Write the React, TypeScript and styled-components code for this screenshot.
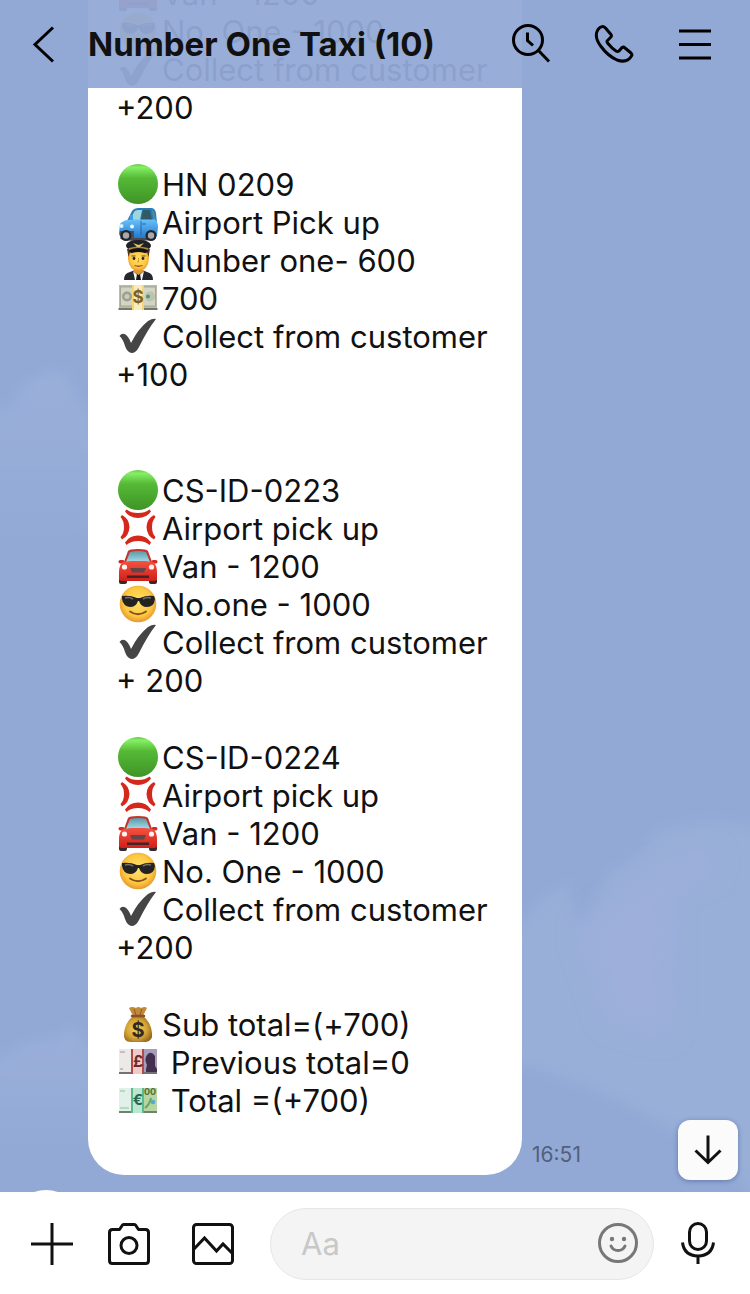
import React from "react";
import styled, { createGlobalStyle } from "styled-components";

const GlobalStyle = createGlobalStyle`
  *, *::before, *::after { box-sizing: border-box; }
  body { margin: 0; }
  button { margin: 0; padding: 0; border: 0; background: none; color: inherit; font: inherit; cursor: pointer; }
`;

const Screen = styled.div`
  display: flex;
  flex-direction: column;
  height: 100vh;
  background: #fff;
  color: #111;
  font-family: Inter, "Liberation Sans", sans-serif;
`;

const Conversation = styled.main`
  position: relative;
  flex: 1;
  min-height: 0;
  overflow: hidden;
  display: flex;
  flex-direction: column;
  justify-content: flex-end;
  background: #92a9d6;
`;

const Sky = styled.svg`
  position: absolute;
  inset: 0;
  width: 100%;
  height: 100%;
`;

const Header = styled.header`
  position: absolute;
  top: 0;
  left: 0;
  right: 0;
  z-index: 2;
  display: flex;
  align-items: center;
  height: 88px;
  padding: 0 14px 0 0;
  background: rgba(146, 169, 214, 0.95);
`;

const HeaderButton = styled.button<{ $width: number }>`
  display: flex;
  align-items: center;
  justify-content: center;
  flex: none;
  width: ${(p) => p.$width}px;
  height: 88px;
  color: #000;
`;

const Title = styled.h1`
  flex: 1;
  min-width: 0;
  margin: 0;
  font-size: 33px;
  line-height: 40px;
  font-weight: 700;
  white-space: nowrap;
`;

const MessageRow = styled.div`
  position: relative;
  display: flex;
  flex: none;
  align-items: flex-end;
  gap: 10px;
  padding-left: 88px;
`;

const Bubble = styled.article`
  display: flex;
  flex-direction: column;
  gap: 39px;
  width: 434px;
  padding: 28px 28px 55px;
  border-radius: 36px;
  background: #fff;
`;

const Group = styled.div<{ $spaced?: boolean }>`
  padding-bottom: ${(p) => (p.$spaced ? 39 : 0)}px;
`;

const Line = styled.p`
  display: flex;
  align-items: center;
  height: 38px;
  margin: 0;
  font-size: 31px;
  line-height: 38px;
  white-space: pre;
`;

const Emoji = styled.svg`
  flex: none;
  width: 40px;
  height: 40px;
  margin: 0 4px 2px 2px;
`;

const Time = styled.time`
  padding-bottom: 8px;
  font-size: 21px;
  line-height: 24px;
  color: #53607c;
`;

const NextRow = styled.div`
  position: relative;
  flex: none;
  height: 2px;
  margin-top: 15px;
  padding-left: 10px;
  overflow: hidden;
`;

const Avatar = styled.div`
  width: 72px;
  height: 72px;
  border-radius: 50%;
  background: #fff;
`;

const ScrollButton = styled.button`
  position: absolute;
  right: 12px;
  bottom: 12px;
  display: flex;
  align-items: center;
  justify-content: center;
  width: 60px;
  height: 60px;
  border-radius: 12px;
  background: #fbfbfc;
  box-shadow: 0 1px 5px rgba(40, 60, 110, 0.45);
`;

const Composer = styled.form`
  display: flex;
  align-items: center;
  flex: none;
  padding: 16px 8px 14px 14px;
  background: #fff;
`;

const ToolButton = styled.button<{ $width: number }>`
  display: flex;
  align-items: center;
  justify-content: center;
  flex: none;
  width: ${(p) => p.$width}px;
  height: 72px;
`;

const Field = styled.div`
  display: flex;
  align-items: center;
  flex: 1;
  min-width: 0;
  height: 72px;
  margin-left: 12px;
  padding: 0 15px 0 30px;
  border: 1px solid #e6e6e6;
  border-radius: 36px;
  background: #f4f4f4;
`;

const TextInput = styled.input`
  flex: 1;
  min-width: 0;
  padding: 0;
  border: 0;
  outline: 0;
  background: transparent;
  font: 400 31px/40px Inter, "Liberation Sans", sans-serif;
  color: #111;
  &::placeholder { color: #c8c8c8; opacity: 1; }
`;

const StickerButton = styled.button`
  display: flex;
  flex: none;
  margin-bottom: 2px;
`;

type EmojiName =
  | "green" | "blueCar" | "pilot" | "dollar" | "check" | "anger"
  | "redCar" | "cool" | "bag" | "pound" | "euro";

const DefsSvg = styled.svg`
  position: absolute;
  width: 0;
  height: 0;
`;

const Defs = () => (
  <DefsSvg aria-hidden="true">
    <defs>
      <linearGradient id="green" x1="0" y1="0" x2="0" y2="1">
        <stop offset="0" stopColor="#63c944" />
        <stop offset="0.08" stopColor="#86f066" />
        <stop offset="0.35" stopColor="#55b936" />
        <stop offset="1" stopColor="#3f9426" />
      </linearGradient>
      <linearGradient id="blue" x1="0" y1="0" x2="0" y2="1">
        <stop offset="0" stopColor="#69c0fa" />
        <stop offset="1" stopColor="#2377cc" />
      </linearGradient>
      <linearGradient id="red" x1="0" y1="0" x2="0" y2="1">
        <stop offset="0" stopColor="#f5523f" />
        <stop offset="1" stopColor="#cf1f1a" />
      </linearGradient>
      <linearGradient id="glass" x1="0" y1="0" x2="0" y2="1">
        <stop offset="0" stopColor="#5d97a4" />
        <stop offset="1" stopColor="#a3dcea" />
      </linearGradient>
      <radialGradient id="face" cx="0.5" cy="0.45" r="0.55">
        <stop offset="0" stopColor="#ffe26a" />
        <stop offset="0.7" stopColor="#fcc842" />
        <stop offset="1" stopColor="#e8972c" />
      </radialGradient>
      <radialGradient id="gold" cx="0.45" cy="0.5" r="0.6">
        <stop offset="0" stopColor="#f6d567" />
        <stop offset="0.6" stopColor="#d5a435" />
        <stop offset="1" stopColor="#93671b" />
      </radialGradient>
    </defs>
  </DefsSvg>
);

const Sign = ({ x, y, size, fill, children }: { x: number; y: number; size: number; fill: string; children: string }) => (
  <text x={x} y={y} fontSize={size} fontWeight="700" textAnchor="middle" fill={fill} fontFamily="Inter, sans-serif">
    {children}
  </text>
);

const art: Record<EmojiName, React.ReactNode> = {
  green: <circle cx="20" cy="20" r="20" fill="url(#green)" />,
  blueCar: (
    <>
      <ellipse cx="20" cy="36" rx="18" ry="3" fill="#484a50" />
      <path d="M9 19 L14 9 Q16 6 21 6 L33 6 Q37 6 38 11 L39 21 Z" fill="#287cba" />
      <path d="M12 18 L16 10 Q17 8 20 8 L24 8 L22 18 Z" fill="#9fd6dd" />
      <path d="M25 8 L32 8 L34 18 L23 18 Z" fill="#315a67" />
      <path d="M34 8 Q36 8 36.500 11 L38 18 L35.500 18 Z" fill="#4b8ba2" />
      <path d="M2 22 Q5 18 12 17.500 L37 17.500 Q40 20 40 25 L39 34 Q37 37 31 36 L8 36 Q1 36 1 31 Z" fill="url(#blue)" />
      <path d="M2 29 H16 V36 H4 Q1 35 2 29Z" fill="#45505b" />
      <circle cx="3.500" cy="24" r="2" fill="#d9f4ff" /><circle cx="14" cy="24.500" r="2" fill="#e8f8ff" />
      <path d="M23 19 V33 M24 22 H28" stroke="#175897" strokeWidth="0.8" />
      <path d="M12 13 h3 v5 h-3z" fill="#3e9fe7" />
      <circle cx="8" cy="33.500" r="5.500" fill="#252529" /><circle cx="8" cy="33.500" r="3.200" fill="#a6aab0" />
      <circle cx="33" cy="33.500" r="5.500" fill="#252529" /><circle cx="33" cy="33.500" r="3.200" fill="#a6aab0" />
    </>
  ),
  pilot: (
    <>
      <path d="M6 40 Q6 33 12 32 L17 30 H24 L29 32 Q35 33 35 40 Z" fill="#24272e" />
      <path d="M15 31 L20.500 36 L26 31 L24 40 H17 Z" fill="#f5f6f8" />
      <path d="M19 34 h3 l1 6 h-5z" fill="#15171c" />
      <path d="M16 26 H25 V32 L20.500 35 L16 32 Z" fill="#d99b2d" />
      <path d="M10 9 H31 V19 Q30 30 20.500 31 Q11 30 10 19 Z" fill="url(#face)" />
      <path d="M9 9 H32 L30.500 17 L29 12 H12 L10.500 17 Z" fill="#50351e" />
      <path d="M8 5 Q10 0 20.500 0 Q31 0 33 5 Q33 8 30 9 Q20 6 11 9 Q8 8 8 5 Z" fill="#202126" />
      <path d="M11 8 Q20.500 5 30 8 V11 Q20 8 11 11 Z" fill="#b08a34" />
      <path d="M11 10 Q20.500 6 30 10 Q30 13 27 13 Q20 11 14 13 Q11 13 11 10Z" fill="#111217" />
      <path d="M15 3 L20.500 5 L26 3 L22 7 H19Z" fill="#e8c85c" />
      <path d="M13.500 16 h4 M23.500 16 h4" stroke="#6d481e" strokeWidth="1.200" />
      <circle cx="16" cy="18.500" r="1.400" fill="#342113" /><circle cx="25" cy="18.500" r="1.400" fill="#342113" />
      <path d="M20.500 18 V22 H19" stroke="#d9912c" fill="none" />
      <path d="M16.500 25.500 Q20.500 27 24.500 25.500" stroke="#a44b2d" strokeWidth="1.300" fill="none" />
    </>
  ),
  dollar: (
    <>
      <path d="M0.500 30 H39.500 V32 H0.500Z" fill="#777867" />
      <rect x="1" y="7" width="38" height="23" fill="#b9bda5" />
      <rect x="2.500" y="9" width="35" height="19" fill="#d3d4c4" stroke="#9ba290" strokeWidth="0.800" />
      <circle cx="9" cy="18.500" r="5" fill="#9aa18f" /><circle cx="9" cy="18.500" r="2.500" fill="#c9ccba" />
      <circle cx="32" cy="18.500" r="5" fill="#bac4af" /><circle cx="30" cy="18.500" r="2" fill="#4d9a6a" />
      <rect x="14" y="7" width="12" height="25" fill="#faecba" /><path d="M15 7V32M25 7V32" stroke="#f3cd62" strokeWidth="1.500" />
      <Sign x={20} y={25} size={17} fill="#80601a">$</Sign>
    </>
  ),
  check: (
    <path d="M1.500 20 Q4 16.500 7.500 18.500 Q11 21 13 27 Q20 13 30 5 Q35 2 38 3 Q30 13 21 31 Q18 37 13.500 37 Q9 36 7 30 Q5 23 1.500 20Z" fill="#454545" />
  ),
  anger: (
    <g fill="#d5281d">
      <path d="M8.500 1.500 Q13 5 20 5 Q27 5 31.500 1.500 L33 3.500 Q28.500 10 20 10 Q11.500 10 7 3.500Z" />
      <path d="M8.500 37 Q13 33 20 33 Q27 33 31.500 37 L33 34.500 Q28.500 27.500 20 27.500 Q11.500 27.500 7 34.500Z" />
      <path d="M4 7 Q11 10.500 11.500 19 Q11 28 4 31.500 L2.500 29 Q6 25.500 6 19 Q6 13 2.500 9Z" />
      <path d="M36 7 Q29 10.500 28.500 19 Q29 28 36 31.500 L37.500 29 Q34 25.500 34 19 Q34 13 37.500 9Z" />
    </g>
  ),
  redCar: (
    <>
      <rect x="1" y="31" width="8" height="7" rx="2" fill="#35282a" /><rect x="31" y="31" width="8" height="7" rx="2" fill="#35282a" />
      <path d="M6 16 L10 5 Q11 3 20 3 Q29 3 30 5 L34 16Z" fill="#c4342d" />
      <path d="M8 16 L12 6 Q20 4 28 6 L32 16 Q20 14 8 16Z" fill="url(#glass)" />
      <rect x="0.500" y="14" width="6" height="3.500" rx="1.700" fill="#d42a24" /><rect x="33.500" y="14" width="6" height="3.500" rx="1.700" fill="#d42a24" />
      <path d="M5 16 Q20 14 35 16 Q39 19 39 26 V33 Q39 35 35 35 H5 Q1 35 1 33 V26 Q1 19 5 16Z" fill="url(#red)" />
      <circle cx="6.500" cy="21" r="2.600" fill="#fff2ef" /><circle cx="33.500" cy="21" r="2.600" fill="#fff2ef" />
      <path d="M12 22 H28 L26 26.500 H14Z" fill="#62464b" />
      <path d="M9 29.500 H31 V32 H9Z" fill="#442328" />
    </>
  ),
  cool: (
    <>
      <circle cx="20" cy="20" r="18.300" fill="url(#face)" />
      <path d="M4 12 Q12 11 19 14 H22 Q29 11 36 12 L37 15 Q36 23 29 23 Q23 23 21 17 H20 Q18 23 12 23 Q5 22 4 15Z" fill="#242322" />
      <path d="M7 14 Q11 12.500 15 15" stroke="#77736d" strokeWidth="1.500" fill="none" /><path d="M25 15 Q29 12.500 33 14" stroke="#77736d" strokeWidth="1.500" fill="none" />
      <path d="M12 27.500 Q20 33 28 27.500" stroke="#85501b" strokeWidth="1.800" fill="none" strokeLinecap="round" />
    </>
  ),
  bag: (
    <>
      <path d="M15 12 Q7 19 6 29 Q5 38 13 38 H28 Q35 37 34 29 Q33 18 25 12Z" fill="url(#gold)" />
      <path d="M15 12 L11 4 Q14 2 18 4 Q20 2 23 4 Q27 2 29 4 L25 12Z" fill="#c28b3c" />
      <path d="M16 5 L18 11 M24 5 L22 11" stroke="#895c22" />
      <path d="M14 12 H26" stroke="#8a5126" strokeWidth="2.500" strokeLinecap="round" />
      <Sign x={20} y={33} size={20} fill="#34291a">$</Sign>
    </>
  ),
  pound: (
    <>
      <rect x="1" y="29" width="38" height="3" fill="#777078" />
      <rect x="1" y="7" width="38" height="23" fill="#eceae6" /><path d="M26 7H39V30H26Z" fill="#a79dbb" />
      <path d="M28 30 V27 L29 23 Q26 17 29 13 Q33 8 37 14 L37 24 L39 27 V30Z" fill="#43304f" />
      <rect x="13" y="7" width="13" height="25" fill="#ecccc8" /><path d="M14 7V32M25 7V32" stroke="#b54849" strokeWidth="2" />
      <Sign x={20} y={25} size={16} fill="#74282c">£</Sign>
      <path d="M2 10h5M2 27h3" stroke="#99919e" />
    </>
  ),
  euro: (
    <>
      <rect x="1" y="30" width="38" height="3" fill="#718171" />
      <rect x="1" y="8" width="38" height="23" fill="#e2f0ea" /><path d="M26 8H39V31H26Z" fill="#b5d69f" />
      <path d="M27 28 Q32 24 33 18" stroke="#6ba565" strokeWidth="2" fill="none" />
      <circle cx="35" cy="22" r="2.300" fill="#55a9d3" />
      <rect x="13" y="8" width="13" height="25" fill="#bde5d2" /><path d="M14 8V33M25 8V33" stroke="#58ba8d" strokeWidth="2" />
      <Sign x={20} y={25} size={15} fill="#286652">€</Sign>
      <Sign x={32} y={15} size={9} fill="#546f37">00</Sign>
      <path d="M2 11h5M2 28h9" stroke="#86c493" />
    </>
  ),
};

type Entry = { icon?: EmojiName; text: string };
type Section = { spaced?: boolean; lines: Entry[] };

const sections: Section[] = [
  {
    lines: [
      { icon: "redCar", text: "Van - 1200" },
      { icon: "cool", text: "No. One - 1000" },
      { icon: "check", text: "Collect from customer" },
      { text: "+200" },
    ],
  },
  {
    spaced: true,
    lines: [
      { icon: "green", text: "HN 0209" },
      { icon: "blueCar", text: "Airport Pick up" },
      { icon: "pilot", text: "Nunber one- 600" },
      { icon: "dollar", text: "700" },
      { icon: "check", text: "Collect from customer" },
      { text: "+100" },
    ],
  },
  {
    lines: [
      { icon: "green", text: "CS-ID-0223" },
      { icon: "anger", text: "Airport pick up" },
      { icon: "redCar", text: "Van - 1200" },
      { icon: "cool", text: "No.one - 1000" },
      { icon: "check", text: "Collect from customer" },
      { text: "+ 200" },
    ],
  },
  {
    lines: [
      { icon: "green", text: "CS-ID-0224" },
      { icon: "anger", text: "Airport pick up" },
      { icon: "redCar", text: "Van - 1200" },
      { icon: "cool", text: "No. One - 1000" },
      { icon: "check", text: "Collect from customer" },
      { text: "+200" },
    ],
  },
  {
    lines: [
      { icon: "bag", text: "Sub total=(+700)" },
      { icon: "pound", text: " Previous total=0" },
      { icon: "euro", text: " Total =(+700)" },
    ],
  },
];

const Clouds = () => (
  <Sky viewBox="0 0 750 1192" preserveAspectRatio="xMidYMax slice" aria-hidden="true">
    <defs>
      <filter id="soft" x="-20%" y="-20%" width="140%" height="140%"><feGaussianBlur stdDeviation="6" /></filter>
      <filter id="softer" x="-30%" y="-30%" width="160%" height="160%"><feGaussianBlur stdDeviation="12" /></filter>
      <linearGradient id="fade" x1="0" y1="0" x2="0" y2="1">
        <stop offset="0" stopColor="#9ab0da" />
        <stop offset="1" stopColor="#92a9d6" />
      </linearGradient>
    </defs>
    <g fill="url(#fade)">
      <path filter="url(#soft)" d="M-20 412 L14 406 L20 388 Q38 378 50 373 Q66 370 70 385 L94 425 V545 H-20Z" />
      <path filter="url(#soft)" d="M-20 1066 L10 1054 L28 1042 L58 1040 Q66 1024 78 1034 L94 1062 V1150 H-20Z" />
    </g>
    <path filter="url(#soft)" fill="#98afd8" d="M515 932 L540 900 L568 884 L576 922 L588 916 L608 874 L640 854 L656 832 L710 820 L770 828 V1210 Q680 1110 515 1062Z" />
    <path filter="url(#softer)" fill="#9dafda" d="M580 930 L620 900 L660 868 L712 850 L712 872 L670 890 L668 1035 L610 1020Z" />
  </Sky>
);

export default function App() {
  return (
    <Screen>
      <GlobalStyle />
      <Defs />
      <Conversation>
        <Clouds />
        <Header>
          <HeaderButton type="button" aria-label="Back" $width={88}>
            <svg width="40" height="40" viewBox="0 0 40 40" fill="none" stroke="currentColor" strokeWidth="3">
              <path d="M29 3.500 L11 20.500 L29 37.500" />
            </svg>
          </HeaderButton>
          <Title>Number One Taxi (10)</Title>
          <HeaderButton type="button" aria-label="Search" $width={86}>
            <svg width="40" height="40" viewBox="0 0 40 40" fill="none" stroke="currentColor" strokeWidth="3">
              <circle cx="17" cy="16" r="14.500" />
              <path d="M16.500 8.500 V16.500 L22 21.500 M27.500 26.500 L38 37.500" />
            </svg>
          </HeaderButton>
          <HeaderButton type="button" aria-label="Call" $width={80}>
            <svg width="40" height="40" viewBox="0 0 40 40" fill="none" stroke="currentColor" strokeWidth="3" strokeLinejoin="round">
              <path d="M4 5.500 Q8 0.500 11.500 4 L17 10.500 Q18 12 16.500 13.500 L13.500 16.500 Q12.500 17.500 13.500 19 Q18 24.500 22 27 Q23.500 28 25 27 L28 23.500 Q29.500 22.500 31 24 L37 29 Q38.500 30.500 37.500 32 Q33 39.500 23 36 Q14 32 7 22.500 Q-0.500 12.500 4 5.500Z" />
            </svg>
          </HeaderButton>
          <HeaderButton type="button" aria-label="Menu" $width={82}>
            <svg width="40" height="40" viewBox="0 0 40 40" stroke="currentColor" strokeWidth="3">
              <path d="M4 7 H36 M4 20.500 H36 M4 34 H36" />
            </svg>
          </HeaderButton>
        </Header>
        <MessageRow>
          <Bubble>
            {sections.map((section, s) => (
              <Group key={s} $spaced={section.spaced}>
                {section.lines.map((line, i) => (
                  <Line key={i}>
                    {line.icon && <Emoji viewBox="0 0 40 40" aria-hidden="true">{art[line.icon]}</Emoji>}
                    <span>{line.text}</span>
                  </Line>
                ))}
              </Group>
            ))}
          </Bubble>
          <Time>16:51</Time>
        </MessageRow>
        <NextRow><Avatar /></NextRow>
        <ScrollButton type="button" aria-label="Scroll to latest">
          <svg width="32" height="32" viewBox="0 0 32 32" fill="none" stroke="#111" strokeWidth="3">
            <path d="M16 1.500 V29 M3.500 16.500 L16 28.500 L28.500 16.500" />
          </svg>
        </ScrollButton>
      </Conversation>
      <Composer>
        <ToolButton type="button" aria-label="More" $width={76}>
          <svg width="42" height="42" viewBox="0 0 42 42" stroke="#111" strokeWidth="3"><path d="M0 21 H42 M21 0 V42" /></svg>
        </ToolButton>
        <ToolButton type="button" aria-label="Camera" $width={78}>
          <svg width="42" height="42" viewBox="0 0 42 42" fill="none" stroke="#111" strokeWidth="3" strokeLinejoin="round">
            <path d="M4.500 6.500 H11.500 L14.500 2 Q15 1.500 16 1.500 H26 Q27 1.500 27.500 2 L30.500 6.500 H37.500 Q40.500 6.500 40.500 9.500 V37.500 Q40.500 40.500 37.500 40.500 H4.500 Q1.500 40.500 1.500 37.500 V9.500 Q1.500 6.500 4.500 6.500Z" />
            <circle cx="21" cy="22.500" r="8" />
          </svg>
        </ToolButton>
        <ToolButton type="button" aria-label="Photos" $width={90}>
          <svg width="42" height="42" viewBox="0 0 42 42" fill="none" stroke="#111" strokeWidth="3">
            <rect x="1.500" y="1.500" width="39" height="39" rx="3" />
            <path d="M2 26 L12.500 15 L24.500 28 L31 21 L40 30" />
          </svg>
        </ToolButton>
        <Field>
          <TextInput aria-label="Message" placeholder="Aa" />
          <StickerButton type="button" aria-label="Stickers">
            <svg width="40" height="40" viewBox="0 0 40 40" fill="none" stroke="#777" strokeWidth="3">
              <circle cx="20" cy="20" r="18.500" />
              <path d="M13 23 Q15 27.500 20 27.500 Q25 27.500 27 23" strokeLinecap="round" />
              <circle cx="14" cy="16" r="2.200" fill="#777" stroke="none" />
              <circle cx="26" cy="16" r="2.200" fill="#777" stroke="none" />
            </svg>
          </StickerButton>
        </Field>
        <ToolButton type="button" aria-label="Voice message" $width={88}>
          <svg width="34" height="44" viewBox="0 0 34 44" fill="none" stroke="#111" strokeWidth="3">
            <rect x="8.500" y="1.500" width="17" height="26" rx="8.500" />
            <path d="M1.500 20.500 Q3 33.500 17 34 Q31 33.500 32.500 20.500 M17 34 V42" />
          </svg>
        </ToolButton>
      </Composer>
    </Screen>
  );
}
